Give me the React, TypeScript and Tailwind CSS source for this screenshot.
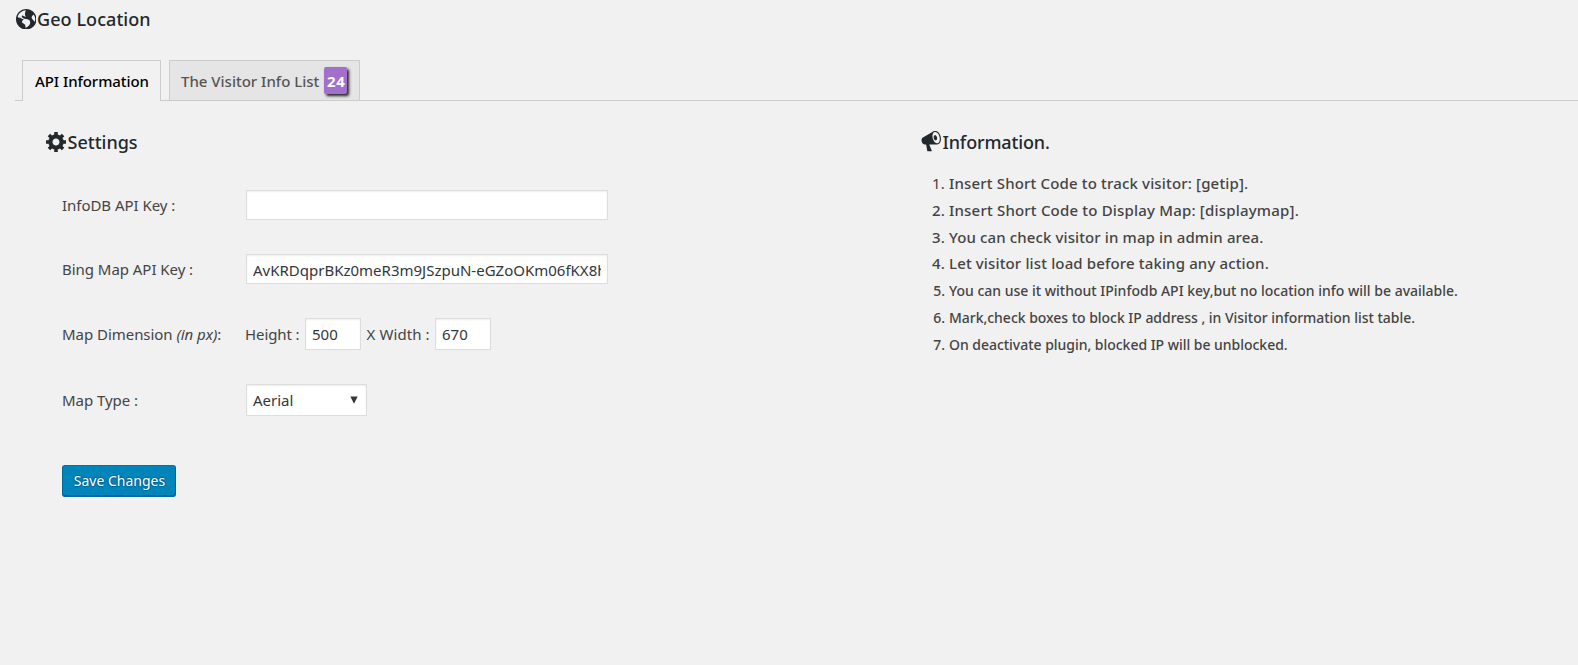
import type { ReactNode } from "react";

type IconProps = { className?: string };

const GlobeIcon = ({ className }: IconProps) => (
  <svg viewBox="0 0 18 18" fill="currentColor" className={className}>
    <path d="M9 0C4.03 0 0 4.03 0 9s4.03 9 9 9 9-4.03 9-9-4.03-9-9-9zm3.46 11.95c0 1.47-.8 3.3-4.06 4.7.3-4.17-2.52-3.69-3.2-5 .126-1.1.804-2.063 1.8-2.55-1.552-.266-3-.96-4.18-2 .05.47.28.904.64 1.21-.782-.295-1.458-.817-1.94-1.5.977-3.225 3.883-5.482 7.25-5.63-.84 1.38-1.5 4.13 0 5.57C7.23 7 6.26 5 5.41 5.79c-1.13 1.06.33 2.51 3.42 3.08 3.29.59 3.66 1.58 3.63 3.08zm1.34-4c-.32-1.11.62-2.23 1.69-3.14a7.27 7.27 0 0 1 .84 6.68c-.77-1.89-2.17-2.32-2.53-3.57v.03z" />
  </svg>
);

const GearIcon = ({ className }: IconProps) => (
  <svg viewBox="1 2 17 17" fill="currentColor" className={className}>
    <path d="M18 12h-2.18c-.17.7-.44 1.35-.81 1.93l1.54 1.54-2.1 2.1-1.54-1.54c-.58.36-1.23.63-1.91.79V19H8v-2.18c-.68-.16-1.33-.43-1.91-.79l-1.54 1.54-2.12-2.12 1.54-1.54c-.36-.58-.63-1.23-.79-1.91H1V9.03h2.17c.16-.7.44-1.35.8-1.94L2.43 5.55l2.1-2.1 1.54 1.54c.58-.37 1.24-.64 1.93-.81V2h3v2.18c.68.16 1.33.43 1.91.79l1.54-1.54 2.12 2.12-1.54 1.54c.36.59.64 1.24.8 1.94H18V12zm-8.5 1.5c1.66 0 3-1.34 3-3s-1.34-3-3-3-3 1.34-3 3 1.34 3 3 3z" />
  </svg>
);

const MegaphoneIcon = ({ className }: IconProps) => (
  <svg viewBox="1 1.4 17.5 18" fill="currentColor" className={className}>
    <path
      fillRule="evenodd"
      d="M18.15 5.94c.46 1.62.38 3.22-.02 4.48-.42 1.28-1.26 2.18-2.3 2.48-.16.06-.26.06-.4.06-.06.02-.12.02-.18.02-.06.02-.14.02-.22.02h-6.8l2.22 5.5c.02.14-.06.26-.14.34-.08.1-.24.16-.34.16H6.95c-.1 0-.26-.06-.34-.16-.08-.08-.16-.2-.14-.34l-1-5.5H4.25l-.02-.02c-.5.06-1.08-.18-1.54-.62s-.88-1.08-1.06-1.88c-.24-.8-.2-1.56-.02-2.2.18-.62.58-1.08 1.06-1.3l.02-.02 9-5.4c.1-.06.18-.1.24-.16.06-.04.14-.08.24-.12.16-.08.28-.12.5-.18 1.04-.3 2.24.1 3.22.98s1.84 2.24 2.26 3.86zm-2.58 5.98h-.02c.4-.1.74-.34 1.04-.7.58-.7.86-1.76.86-3.04 0-.64-.1-1.3-.28-1.98-.34-1.36-1.02-2.5-1.78-3.24s-1.68-1.1-2.46-.88c-.82.22-1.4.96-1.7 2-.32 1.04-.28 2.36.06 3.72.38 1.36 1 2.5 1.8 3.24.78.74 1.62 1.1 2.48.88zm-2.54-7.08c.22-.04.42-.02.62.04.38.16.76.48 1.02 1s.42 1.2.42 1.78c0 .3-.04.56-.12.8-.18.48-.44.84-.86.94-.34.1-.8-.06-1.14-.4s-.64-.86-.78-1.5c-.18-.62-.12-1.24.02-1.72s.48-.84.82-.94z"
    />
  </svg>
);

const field =
  "border border-[#ddd] bg-white px-1.5 text-[15px] text-[#32373c] shadow-[inset_0_1px_2px_rgba(0,0,0,0.07)] outline-none";

const Row = ({ label, className, children }: { label: ReactNode; className: string; children: ReactNode }) => (
  <div className={`flex items-center ${className}`}>
    <div className="w-[184px] tracking-[-0.04px] whitespace-nowrap">{label}</div>
    {children}
  </div>
);

const notes = [
  { text: "Insert Short Code to track visitor: [getip].", style: "h-[27px] text-[15px] tracking-[0.16px]", marker: "font-normal" },
  { text: "Insert Short Code to Display Map: [displaymap].", style: "h-[27px] text-[15px] tracking-[0.19px]", marker: "" },
  { text: "You can check visitor in map in admin area.", style: "h-[26px] text-[15px] tracking-[0.12px]", marker: "" },
  { text: "Let visitor list load before taking any action.", style: "h-[27px] text-[15px] tracking-[0.14px]", marker: "" },
  { text: "You can use it without IPinfodb API key,but no location info will be available.", style: "h-[27px] text-[14px]", marker: "" },
  { text: "Mark,check boxes to block IP address , in Visitor information list table.", style: "h-[27px] text-[14px] tracking-[-0.03px]", marker: "" },
  { text: "On deactivate plugin, blocked IP will be unblocked.", style: "h-[26px] text-[14px] tracking-[-0.03px]", marker: "" },
];

export default function App() {
  return (
    <div className="h-[665px] overflow-hidden bg-[#f1f1f1] pl-[15px] font-['Noto_Sans',sans-serif] text-[15px] text-[#444]">
      <h1 className="flex h-[38px] items-center gap-px text-[18px] font-medium tracking-[0.07px] text-[#23282d]">
        <GlobeIcon className="-mt-[0.5px] ml-[0.5px] size-[20.5px]" />
        Geo Location
      </h1>

      <nav className="flex h-[63px] items-end gap-2 border-b border-[#ccc] pl-[7px] font-medium whitespace-nowrap">
        <a className="-mb-px flex h-[41px] w-[139px] items-center border border-b-0 border-[#ccc] bg-[#f1f1f1] pl-3 tracking-[-0.07px] text-black">
          API Information
        </a>
        <a className="flex h-10 w-[191px] items-center border border-b-0 border-[#ccc] bg-[#e5e5e5] pt-px pl-[11px] text-[#555]">
          The Visitor Info List
          <span className="-mt-0.5 ml-[5px] flex h-[27px] w-[23px] items-center justify-center rounded-xs bg-[#a36fcd] pt-0.5 pl-px text-[15px] font-bold tracking-[0.9px] text-white shadow-[2px_2px_3px_#222]">
            24
          </span>
        </a>
      </nav>

      <main className="flex">
        <section className="w-[906px] pl-[31px]">
          <h2 className="flex h-[72px] items-center gap-[1.5px] pt-[10px] text-[18px] font-medium text-[#23282d]">
            <GearIcon className="size-5" />
            Settings
          </h2>
          <form className="pl-4">
            <Row label="InfoDB API Key :" className="h-16">
              <input className={`h-[30px] w-[362px] ${field}`} defaultValue="" />
            </Row>
            <Row label="Bing Map API Key :" className="h-16">
              <input
                className={`h-[30px] w-[362px] pt-0.5 ${field}`}
                defaultValue="AvKRDqprBKz0meR3m9JSzpuN-eGZoOKm06fKX8hT2vQwLs"
              />
            </Row>
            <Row
              className="h-[66px]"
              label={
                <>
                  Map Dimension <i>(in px)</i>:
                </>
              }
            >
              <span className="-ml-px w-[60px] tracking-[-0.1px]">Height :</span>
              <input className={`h-8 w-14 ${field}`} defaultValue="500" />
              <span className="w-[74px] pl-[5.5px] tracking-[0.1px]">X Width :</span>
              <input className={`h-8 w-14 ${field}`} defaultValue="670" />
            </Row>
            <Row label="Map Type :" className="h-[66px]">
              <div className={`flex h-8 w-[121px] items-center justify-between ${field}`}>
                Aerial
                <svg viewBox="0 0 8 8" className="mr-0.5 size-2" fill="currentColor">
                  <path d="M0.3 0.5h7.4L4 7.8z" />
                </svg>
              </div>
            </Row>
            <button
              type="button"
              className="mt-8 flex h-8 w-[114px] items-center justify-center rounded-[3px] border border-[#006799] border-t-[#0073aa] bg-[#0085ba] pb-[1.5px] pl-px text-[14px] whitespace-nowrap text-white shadow-[inset_0_-1px_0_#006799] [text-shadow:0_-1px_1px_#006799,1px_0_1px_#006799,0_1px_1px_#006799,-1px_0_1px_#006799]"
            >
              Save Changes
            </button>
          </form>
        </section>

        <section>
          <h2 className="flex h-[69px] items-center gap-[1.5px] pt-[13px] text-[18px] font-medium tracking-[-0.15px] text-[#23282d]">
            <MegaphoneIcon className="-mt-px h-[21px] w-5" />
            Information.
          </h2>
          <ol className="pl-px font-medium whitespace-nowrap">
            {notes.map((note, i) => (
              <li key={note.text} className={`flex items-center gap-1 ${note.style}`}>
                <span className={`w-[23px] text-right ${note.marker}`}>{i + 1}.</span>
                <span>{note.text}</span>
              </li>
            ))}
          </ol>
        </section>
      </main>
    </div>
  );
}
